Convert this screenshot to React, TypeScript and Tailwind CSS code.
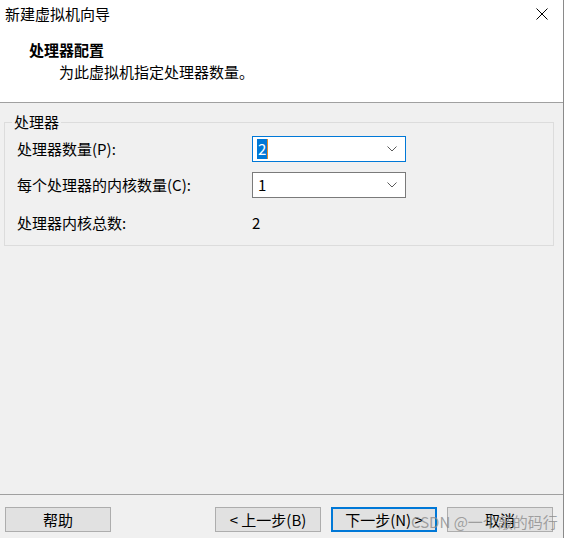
import React from 'react';

// ─── Wizard dialog: processor configuration page ────────────────────────────

const FONT = { fontFamily: '"Noto Sans CJK SC", "Microsoft YaHei", sans-serif' };

export default function App() {
  return (
    <div className="w-[565px] h-[538px] bg-white overflow-hidden" style={FONT}>
      <div className="relative w-[564px] h-[538px] flex flex-col border-r border-[#8a8a8a] bg-[#f0f0f0] text-[15px] text-black">
        {/* Title bar */}
        <div className="h-[27px] flex items-center justify-between bg-white pl-[5px] pr-[15px]">
          <span className="leading-[20px]">新建虚拟机向导</span>
          <CloseIcon />
        </div>

        {/* Header */}
        <div className="h-[75px] bg-white pt-[13px]">
          <p className="pl-[29px] font-bold leading-[20px]">处理器配置</p>
          <p className="pl-[59px] mt-[2px] leading-[20px]">为此虚拟机指定处理器数量。</p>
        </div>
        <div className="h-px bg-[#a0a0a0]" />

        {/* Body */}
        <div className="flex-1 pt-[9px]">
          <fieldset className="ml-[4px] w-[550px] border border-[#dcdcdc] pl-[12px] pb-[9px]">
            <legend className="ml-[-5px] px-[2px] leading-[20px]">处理器</legend>
            <div className="mt-[4px] flex flex-col gap-[10px]">
              <Row label="处理器数量(P):">
                <Dropdown value="2" focused />
              </Row>
              <Row label="每个处理器的内核数量(C):">
                <Dropdown value="1" />
              </Row>
              <div className="h-[26px] mt-[2px] flex items-center">
                <span className="w-[235px]">处理器内核总数:</span>
                <span>2</span>
              </div>
            </div>
          </fieldset>
        </div>

        {/* Footer */}
        <div className="h-px bg-[#a0a0a0]" />
        <div className="h-[43px] flex items-start justify-between pt-[12px] pl-[5px] pr-[10px]">
          <Button>帮助</Button>
          <div className="flex gap-[10px]">
            <Button>&lt;&nbsp;上一步(B)</Button>
            <Button primary>下一步(N)&nbsp;&gt;</Button>
            <Button>取消</Button>
          </div>
        </div>

        <span className="absolute left-[411px] top-[511px] leading-[22px] text-[15px] text-[#8c8c8c]/80 pointer-events-none whitespace-nowrap">
          CSDN @一个敲的码行
        </span>
      </div>
    </div>
  );
}

function Row({ label, children }: { label: string; children: React.ReactNode }) {
  return (
    <div className="h-[26px] flex items-center">
      <span className="w-[235px]">{label}</span>
      {children}
    </div>
  );
}

function Dropdown({ value, focused }: { value: string; focused?: boolean }) {
  return (
    <div
      className={`w-[154px] h-[26px] bg-white border flex items-center justify-between pl-[4px] pr-[8px] ${
        focused ? 'border-[#0078d7]' : 'border-[#7a7a7a]'
      }`}
    >
      {focused ? (
        <span className="flex items-center">
          <span className="bg-[#0078d7] text-white leading-[20px] px-px">{value}</span>
          <span className="w-px h-[20px] bg-[#e08a2c]" />
        </span>
      ) : (
        <span className="leading-[20px] pl-px">{value}</span>
      )}
      <svg width="10" height="6" viewBox="0 0 10 6" className="text-[#5a5a5a]">
        <path d="M0.5 0.5 L5 5 L9.5 0.5" fill="none" stroke="currentColor" strokeWidth="1" />
      </svg>
    </div>
  );
}

function Button({ children, primary }: { children: React.ReactNode; primary?: boolean }) {
  return (
    <button
      className={`w-[106px] h-[25px] bg-[#e1e1e1] flex items-center justify-center leading-[20px] ${
        primary ? 'border-2 border-[#0078d7]' : 'border border-[#adadad]'
      }`}
    >
      {children}
    </button>
  );
}

function CloseIcon() {
  return (
    <svg width="12" height="12" viewBox="0 0 12 12">
      <path d="M0.5 0.5 L11.5 11.5 M11.5 0.5 L0.5 11.5" stroke="#000" strokeWidth="1" />
    </svg>
  );
}
